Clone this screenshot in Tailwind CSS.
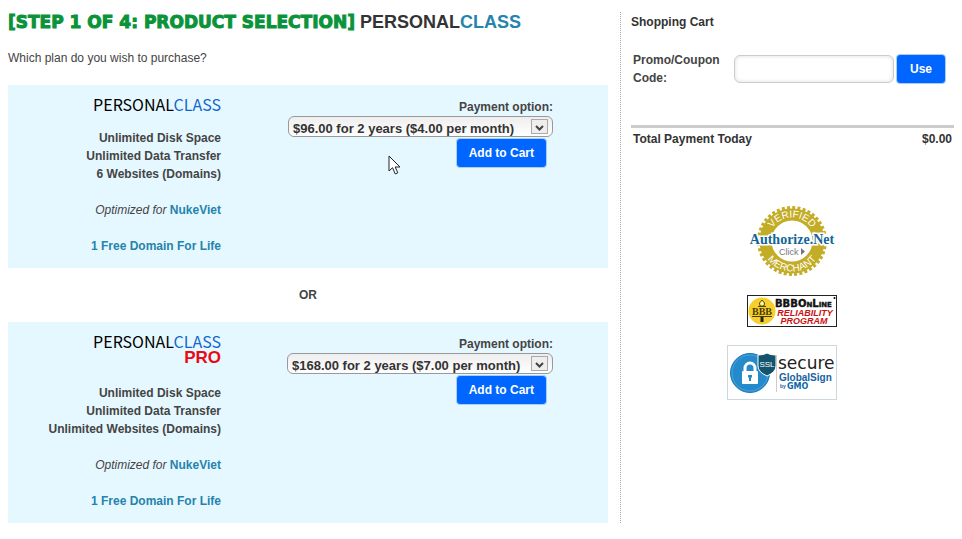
<!DOCTYPE html>
<html lang="en">
<head>
    <meta charset="UTF-8">
    <meta name="viewport" content="width=device-width, initial-scale=1.0">
    <title>Product Selection</title>
    <script src="https://cdn.jsdelivr.net/npm/@tailwindcss/browser@4"></script>
</head>
<body class="relative bg-white font-['Liberation_Sans',Arial,sans-serif] text-[12px] leading-[18px] text-[#444]">
    <div class="grid grid-cols-[minmax(0,621fr)_minmax(0,341fr)] pt-3">
        <main class="border-r border-dotted border-[#aaa] pl-2 pr-3">
            <h1 class="text-[18px] leading-5 font-bold text-[#333] whitespace-nowrap"><span class="font-['DejaVu_Sans',sans-serif] text-[17px] text-[#0a9339] [-webkit-text-stroke:1px_#0a9339]">[STEP 1 OF 4: PRODUCT SELECTION]</span> PERSONAL<span class="text-[#2583ad]">CLASS</span></h1>
            <p class="mt-[17px]">Which plan do you wish to purchase?</p>

            <section class="mt-[18px] flex justify-between bg-[#e6f8ff] pt-3 pr-[55px] pb-[13px]">
                <div class="w-[213px] text-right font-bold">
                    <h2 class="mb-[18px] font-['Noto_Sans_CJK_JP',sans-serif] text-[16px] leading-[14px] font-normal text-black">PERSONAL<span class="text-[#1466cc]">CLASS</span></h2>
                    <p>Unlimited Disk Space</p>
                    <p>Unlimited Data Transfer</p>
                    <p>6 Websites (Domains)</p>
                    <p class="mt-[18px] font-normal"><i>Optimized for</i> <a href="#" class="font-bold text-[#2583ad]">NukeViet</a></p>
                    <p class="mt-[18px]"><a href="#" class="text-[#2583ad]">1 Free Domain For Life</a></p>
                </div>
                <form class="flex flex-col items-end pt-px font-bold">
                    <label for="plan-personal">Payment option:</label>
                    <div class="relative">
                        <select id="plan-personal" class="block h-[21px] w-[265px] appearance-none rounded-md border border-[#999] bg-linear-to-b from-[#eee] to-white px-1 pt-[3px] text-[13px] leading-[18px] font-bold text-[#333]">
                            <option>$96.00 for 2 years ($4.00 per month)</option>
                        </select>
                        <svg class="pointer-events-none absolute top-[3px] right-[5px]" width="17" height="15" viewBox="0 0 17 15"><rect x=".5" y=".5" width="16" height="14" fill="#eee" stroke="#aaa"/><path d="M5 7l3.500 3.500L12 7" fill="none" stroke="#444" stroke-width="2"/></svg>
                    </div>
                    <button type="button" class="mt-px mr-[6px] h-[30px] rounded-[4px] border border-[#a8d0ff] bg-[#0066ff] px-3 font-bold text-white">Add to Cart</button>
                </form>
            </section>

            <p class="my-[18px] text-center font-bold">OR</p>

            <section class="flex justify-between bg-[#e6f8ff] pt-3 pr-[55px] pb-[13px]">
                <div class="w-[213px] text-right font-bold">
                    <h2 class="font-['Noto_Sans_CJK_JP',sans-serif] text-[16px] leading-[14px] font-normal text-black">PERSONAL<span class="text-[#1466cc]">CLASS</span></h2>
                    <p class="mt-[2px] mb-[18px] text-[17px] leading-4 text-[#e80a14]">PRO</p>
                    <p>Unlimited Disk Space</p>
                    <p>Unlimited Data Transfer</p>
                    <p>Unlimited Websites (Domains)</p>
                    <p class="mt-[18px] font-normal"><i>Optimized for</i> <a href="#" class="font-bold text-[#2583ad]">NukeViet</a></p>
                    <p class="mt-[18px]"><a href="#" class="text-[#2583ad]">1 Free Domain For Life</a></p>
                </div>
                <form class="flex flex-col items-end pt-px font-bold">
                    <label for="plan-pro">Payment option:</label>
                    <div class="relative">
                        <select id="plan-pro" class="block h-[21px] w-[266px] appearance-none rounded-md border border-[#999] bg-linear-to-b from-[#eee] to-white px-1 pt-[3px] text-[13px] leading-[18px] font-bold text-[#333]">
                            <option>$168.00 for 2 years ($7.00 per month)</option>
                        </select>
                        <svg class="pointer-events-none absolute top-[3px] right-[5px]" width="17" height="15" viewBox="0 0 17 15"><rect x=".5" y=".5" width="16" height="14" fill="#eee" stroke="#aaa"/><path d="M5 7l3.500 3.500L12 7" fill="none" stroke="#444" stroke-width="2"/></svg>
                    </div>
                    <button type="button" class="mt-px mr-[6px] h-[30px] rounded-[4px] border border-[#a8d0ff] bg-[#0066ff] px-3 font-bold text-white">Add to Cart</button>
                </form>
            </section>
        </main>

        <aside class="pt-px pr-2 pl-[10px]">
            <h2 class="font-bold text-[#333]">Shopping Cart</h2>
            <form class="mt-5 flex items-center pl-[2px] pr-2 font-bold">
                <label for="promo" class="w-[101px]">Promo/Coupon Code:</label>
                <input id="promo" type="text" class="h-7 min-w-0 flex-1 rounded-md border border-[#ccc] bg-white px-2 shadow-[inset_0_0_4px_#ddd]">
                <button type="button" class="ml-[2px] h-[30px] rounded-[4px] border border-[#a8d0ff] bg-[#0066ff] px-[13px] font-bold text-white">Use</button>
            </form>
            <div class="mt-[38px] flex justify-between border-t-3 border-[#ccc] px-[2px] pt-[2px] font-bold text-[#333]">
                <span>Total Payment Today</span>
                <span>$0.00</span>
            </div>

            <div class="mt-[57px] flex flex-col items-center pr-[2px]">
                <a href="#" aria-label="Authorize.Net Verified Merchant">
                    <svg width="88" height="72" viewBox="0 0 88 72">
                        <circle cx="44" cy="36" r="33.500" fill="none" stroke="#c3ac26" stroke-width="3" stroke-dasharray="3 2.262"/>
                        <circle cx="44" cy="36" r="26.500" fill="none" stroke="#c3ac26" stroke-width="12"/>
                        <path id="arc-top" d="M20.500 36a23.500 23.500 0 0 1 47 0" fill="none"/>
                        <path id="arc-bottom" d="M13.500 36a30.500 30.500 0 0 0 61 0" fill="none"/>
                        <g font-family="Liberation Sans, sans-serif" font-size="10" fill="#fff" text-anchor="middle">
                            <text><textPath href="#arc-top" startOffset="50%">VERIFIED</textPath></text>
                            <text><textPath href="#arc-bottom" startOffset="50%">MERCHANT</textPath></text>
                        </g>
                        <text x="44" y="39" text-anchor="middle" font-family="Liberation Serif, serif" font-size="14" font-weight="bold" fill="#126596" stroke="#fff" stroke-width="3" paint-order="stroke">Authorize.Net</text>
                        <text x="31" y="50" font-family="Liberation Sans, sans-serif" font-size="9" fill="#777">Click</text>
                        <path d="M53 43l4 3.500-4 3.500z" fill="#777"/>
                    </svg>
                </a>
                <a href="#" class="mt-[18px]" aria-label="BBB OnLine Reliability Program">
                    <svg width="90" height="32" viewBox="0 0 90 32">
                        <rect x=".5" y=".5" width="89" height="31" fill="#fff" stroke="#222"/>
                        <circle cx="15" cy="16" r="13.500" fill="#f5cf2c"/>
                        <path d="M15 5q-4 3-2 6h4q2-3-2-6zM11 11.500h8" fill="#fff2a0" stroke="#554400"/>
                        <path d="M13.500 22h3v5h-3z" fill="#222"/>
                        <text x="15" y="20" text-anchor="middle" font-family="Liberation Serif, serif" font-size="10" font-weight="bold" fill="#4b3c00">BBB</text>
                        <path d="M5 21.500h20" stroke="#4b3c00"/>
                        <g font-weight="bold">
                            <text x="28" y="12" font-family="DejaVu Sans, sans-serif" font-size="10" fill="#111" stroke="#111" stroke-width=".4">BBB<tspan>O</tspan><tspan font-size="7">N</tspan><tspan>L</tspan><tspan font-size="7">INE</tspan></text>
                            <g font-family="Liberation Sans, sans-serif" font-size="9" font-style="italic" fill="#cc1010" text-anchor="middle">
                                <text x="58" y="21">RELIABILITY</text>
                                <text x="57" y="29">PROGRAM</text>
                            </g>
                        </g>
                        <circle cx="87.500" cy="3" r="1"/>
                    </svg>
                </a>
                <a href="#" class="mt-[18px] mr-5" aria-label="SSL Secure GlobalSign by GMO">
                    <svg width="110" height="55" viewBox="0 0 110 55">
                        <rect x=".5" y=".5" width="109" height="54" fill="#fff" stroke="#ccd8dd"/>
                        <circle cx="23" cy="28" r="19.500" fill="#248acb" stroke="#1b78b5"/>
                        <circle cx="23" cy="28" r="18" fill="none" stroke="#4aa3da"/>
                        <path d="M18 27v-4a5 5 0 0 1 10 0v4" fill="none" stroke="#fff" stroke-width="3"/>
                        <rect x="15" y="26" width="16" height="13" rx="1" fill="#fff"/>
                        <path d="M21 30h4v2.500h-1V36h-2v-3.500h-1z" fill="#248acb"/>
                        <path d="M31 10q6 0 9-2 3 2 9 2v11q0 6-9 10-9-4-9-10z" fill="#12546e" stroke="#fff"/>
                        <path d="M49.500 10v37" stroke="#ccc"/>
                        <g font-family="Liberation Sans, sans-serif">
                            <text x="40" y="22" text-anchor="middle" font-size="8" fill="#fff">SSL</text>
                            <text x="51" y="24" font-family="DejaVu Sans, sans-serif" font-size="17" fill="#222">secure</text>
                            <text x="52" y="36" font-size="10" font-weight="bold" fill="#17629f">GlobalSign</text>
                            <text x="53" y="43" font-size="5" font-weight="bold" fill="#17629f">by</text>
                            <text x="60" y="44" font-family="DejaVu Sans, sans-serif" font-size="8" font-weight="bold" fill="#0968aa">GMO</text>
                        </g>
                    </svg>
                </a>
            </div>
        </aside>
    </div>

    <!-- mouse pointer -->
    <svg class="pointer-events-none absolute top-[155px] left-[388px]" width="13" height="21" viewBox="0 0 13 21"><path d="M1 1v15l3.500-3.300L7.300 19l2.500-1.200L7.200 12H12z" fill="#fff" stroke="#222"/></svg>
</body>
</html>
